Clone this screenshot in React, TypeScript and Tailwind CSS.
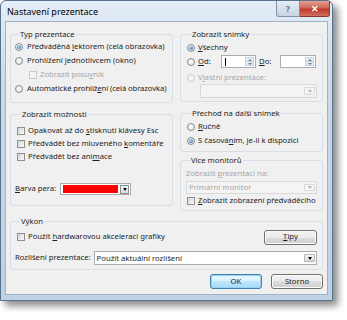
import React from 'react';

const font = { fontFamily: '"Noto Sans", "Open Sans", sans-serif' };

function Radio({ checked = false, disabled = false }: { checked?: boolean; disabled?: boolean }) {
  return (
    <span
      className={`flex h-[8px] w-[8px] shrink-0 items-center justify-center rounded-full border ${
        disabled ? 'border-[#c9cbcd] bg-[#f4f4f4]' : 'border-[#8a8d90] bg-[radial-gradient(circle_at_50%_40%,#ffffff,#d9dcdf)]'
      }`}
    >
      {checked && <span className="h-[4px] w-[4px] rounded-full bg-[radial-gradient(circle_at_40%_35%,#a8d4f7,#1f5fa6)]" />}
    </span>
  );
}

function Check({ disabled = false }: { disabled?: boolean }) {
  return (
    <span
      className={`h-[8px] w-[8px] shrink-0 border ${
        disabled ? 'border-[#c9cbcd] bg-[#f4f4f4]' : 'border-[#8e8f8f] bg-gradient-to-br from-[#d4d6d8] to-[#fbfbfb]'
      }`}
    />
  );
}

function Group({ title, className = '', children }: { title: string; className?: string; children: React.ReactNode }) {
  return (
    <fieldset className={`rounded-[3px] border border-[#d5dfe5] ${className}`}>
      <legend className="ml-[4px] px-[1px] text-[7.7px] leading-[12px] whitespace-nowrap">{title}</legend>
      {children}
    </fieldset>
  );
}

function Arrow({ dim = false }: { dim?: boolean }) {
  return (
    <span
      className={`h-0 w-0 border-x-[2.5px] border-t-[3px] border-x-transparent ${dim ? 'border-t-[#b5b5b5]' : 'border-t-black'}`}
    />
  );
}

function Combo({ className = '', disabled = false, children }: { className?: string; disabled?: boolean; children?: React.ReactNode }) {
  return (
    <div
      className={`flex items-center border ${disabled ? 'border-[#d9d9d9] bg-[#f4f4f4]' : 'border-[#abadb3] bg-white'} ${className}`}
    >
      <div className={`min-w-0 flex-1 overflow-hidden pl-[2px] leading-[11px] ${disabled ? 'text-[#a6a6a6]' : ''}`}>{children}</div>
      <span
        className={`m-[1px] flex h-[calc(100%-4px)] w-[11px] items-center justify-center rounded-[1px] border ${
          disabled ? 'border-[#dadada] bg-[#f4f4f4]' : 'border-[#b4b4b4] bg-gradient-to-b from-[#f6f6f6] to-[#dcdcdc]'
        }`}
      >
        <Arrow dim={disabled} />
      </span>
    </div>
  );
}

function Spin({ className = '', caret = false }: { className?: string; caret?: boolean }) {
  return (
    <div className={`flex h-[13px] items-stretch border border-[#abadb3] bg-white ${className}`}>
      <div className="flex flex-1 items-center pl-[3px]">{caret && <span className="h-[8px] w-px bg-black" />}</div>
      <div className="m-[1px] flex w-[9px] flex-col border border-[#c4d3e0]">
        <span className="flex flex-1 items-center justify-center bg-[#e8f0f8]">
          <span className="h-0 w-0 border-x-[2px] border-b-[2px] border-x-transparent border-b-[#6b7d8f]" />
        </span>
        <span className="flex flex-1 items-center justify-center border-t border-[#c4d3e0] bg-[#e3ecf5]">
          <span className="h-0 w-0 border-x-[2px] border-t-[2px] border-x-transparent border-t-[#6b7d8f]" />
        </span>
      </div>
    </div>
  );
}

function Btn({ children, primary = false, className = '' }: { children: React.ReactNode; primary?: boolean; className?: string }) {
  return (
    <div
      className={`flex h-[15px] items-center justify-center rounded-[3px] border ${
        primary
          ? 'border-[#3c7fb1] bg-[linear-gradient(#eaf6fd_0%,#d9f0fc_50%,#bee6fd_50%,#a7d9f5_100%)] shadow-[inset_0_0_0_1px_#9ad2f3]'
          : 'border-[#707070] bg-[linear-gradient(#f2f2f2_0%,#ebebeb_50%,#dddddd_50%,#cfcfcf_100%)] shadow-[inset_0_0_0_1px_#fcfcfc]'
      } ${className}`}
    >
      {children}
    </div>
  );
}

export default function App() {
  return (
    <div
      className="h-[320px] w-[347px] overflow-hidden bg-white text-[7.7px] leading-none whitespace-nowrap text-[#1e1e1e]"
      style={font}
    >
      <div className="flex h-[301px] w-[333px] flex-col rounded-t-[6px] border border-[#59738c] bg-[linear-gradient(#e4edf7,#c9d9ea_30%,#bed1e5)] px-[4px] pb-[5px] shadow-[5px_5px_7px_rgba(0,0,0,0.45)]">
        <div className="flex h-[20px] items-start justify-between">
          <span className="mt-[6px] ml-[2px] text-[9px] text-black">Nastavení prezentace</span>
          <div className="mr-[-2px] flex">
            <span className="flex h-[16px] w-[24px] items-center justify-center rounded-bl-[3px] border border-t-0 border-[#7f93a8] bg-gradient-to-b from-[#e6eef7] to-[#c6d4e3] text-[8px] font-bold text-[#5a6b7d]">
              ?
            </span>
            <span className="flex h-[16px] w-[30px] items-center justify-center rounded-br-[3px] border border-t-0 border-l-0 border-[#8a3a32] bg-[linear-gradient(#e4a093,#d0685a_45%,#c0392b_55%,#d1705f)] text-[9px] font-bold text-white">
              ✕
            </span>
          </div>
        </div>

        <div className="flex flex-1 flex-col border border-[#9fb2c6] bg-[#f0f0f0] px-[4px] pt-[6px] pb-[4px]">
          <div className="flex items-start gap-[7px]">
            <div className="flex w-[163px] flex-col">
              <Group title="Typ prezentace" className="pb-[6px] pl-[4px]">
                <div className="flex h-[14px] items-center gap-[4px]">
                  <Radio checked />
                  <span>
                    Předváděná <u>l</u>ektorem (celá obrazovka)
                  </span>
                </div>
                <div className="flex h-[14px] items-center gap-[4px]">
                  <Radio />
                  <span>
                    Prohlížení <u>j</u>ednotlivcem (okno)
                  </span>
                </div>
                <div className="ml-[14px] flex h-[14px] items-center gap-[3px] text-[#a6a6a6]">
                  <Check disabled />
                  <span>
                    Zobrazit posu<u>v</u>ník
                  </span>
                </div>
                <div className="flex h-[14px] items-center gap-[4px]">
                  <Radio />
                  <span className="tracking-[-0.1px]">
                    Automatické prohlíž<u>e</u>ní (celá obrazovka)
                  </span>
                </div>
              </Group>

              <Group title="Zobrazit možnosti" className="mt-[5px] pt-[4px] pb-[10px] pl-[6px]">
                <div className="flex h-[13px] items-center gap-[3px]">
                  <Check />
                  <span>
                    Opakovat až do <u>s</u>tisknutí klávesy Esc
                  </span>
                </div>
                <div className="flex h-[13px] items-center gap-[3px]">
                  <Check />
                  <span>
                    Předvádět bez mluveného <u>k</u>omentáře
                  </span>
                </div>
                <div className="flex h-[13px] items-center gap-[3px]">
                  <Check />
                  <span>
                    Předvádět bez ani<u>m</u>ace
                  </span>
                </div>
                <div className="mt-[20px] ml-[-2px] flex h-[12px] items-center gap-[4px]">
                  <span>
                    <u>B</u>arva pera:
                  </span>
                  <div className="flex h-[12px] w-[71px] items-center border border-[#abadb3] bg-white">
                    <span className="m-[2px] h-[8px] flex-1 bg-[#ff0000]" />
                    <span className="mr-[1px] flex h-[9px] w-[9px] items-center justify-center border border-[#8e8f8f] bg-gradient-to-b from-[#f6f6f6] to-[#dcdcdc]">
                      <Arrow />
                    </span>
                  </div>
                </div>
              </Group>
            </div>

            <div className="flex flex-1 flex-col">
              <Group title="Zobrazit snímky" className="pr-[5px] pb-[3px] pl-[6px]">
                <div className="mt-[1px] flex h-[14px] items-center gap-[3px]">
                  <Radio checked />
                  <span>
                    <u>V</u>šechny
                  </span>
                </div>
                <div className="flex h-[13px] items-center">
                  <Radio />
                  <span className="ml-[3px] w-[23px]">
                    <u>O</u>d:
                  </span>
                  <Spin className="w-[35px]" caret />
                  <span className="ml-[3px] w-[21px]">
                    <u>D</u>o:
                  </span>
                  <Spin className="w-[36px]" />
                </div>
                <div className="mt-[4px] flex h-[12px] items-center gap-[3px] text-[#a6a6a6]">
                  <Radio disabled />
                  <span>
                    V<u>l</u>astní prezentace:
                  </span>
                </div>
                <Combo disabled className="ml-[13px] h-[14px]" />
              </Group>

              <Group title="Přechod na další snímek" className="mt-[5px] pb-[3px] pl-[6px]">
                <div className="mt-[1px] flex h-[14px] items-center gap-[3px]">
                  <Radio />
                  <span>
                    <u>R</u>učně
                  </span>
                </div>
                <div className="flex h-[14px] items-center gap-[3px]">
                  <Radio checked />
                  <span>
                    S časová<u>n</u>ím, je-li k dispozici
                  </span>
                </div>
              </Group>

              <Group title="Více monitorů" className="mt-[2px] pr-[5px] pb-[2px] pl-[5px]">
                <div className="mt-[1px] flex h-[13px] items-center text-[#a6a6a6]">
                  <span>
                    Zobrazit <u>p</u>rezentaci na:
                  </span>
                </div>
                <Combo disabled className="mt-[1px] h-[13px]">
                  Primární monitor
                </Combo>
                <div className="ml-[1px] flex h-[14px] items-center gap-[3px]">
                  <Check />
                  <span>
                    <u>Z</u>obrazit zobrazení předváděcího
                  </span>
                </div>
              </Group>
            </div>
          </div>

          <Group title="Výkon" className="mt-[4px] pr-[5px] pb-[4px] pl-[5px]">
            <div className="mt-[2px] flex h-[16px] items-center justify-between">
              <div className="ml-[1px] flex items-center gap-[3px]">
                <Check />
                <span>
                  Použít <u>h</u>ardwarovou akceleraci grafiky
                </span>
              </div>
              <Btn className="w-[53px]">
                <u>T</u>ipy
              </Btn>
            </div>
            <div className="mt-[6px] flex h-[14px] items-center gap-[3px]">
              <span className="ml-[-1px]">Rozlišení prezentace:</span>
              <Combo className="h-[14px] flex-1">Použít aktuální rozlišení</Combo>
            </div>
          </Group>

          <div className="mt-[4px] flex justify-end gap-[9px]">
            <Btn primary className="w-[52px]">
              OK
            </Btn>
            <Btn className="w-[52px]">Storno</Btn>
          </div>
        </div>
      </div>
    </div>
  );
}
